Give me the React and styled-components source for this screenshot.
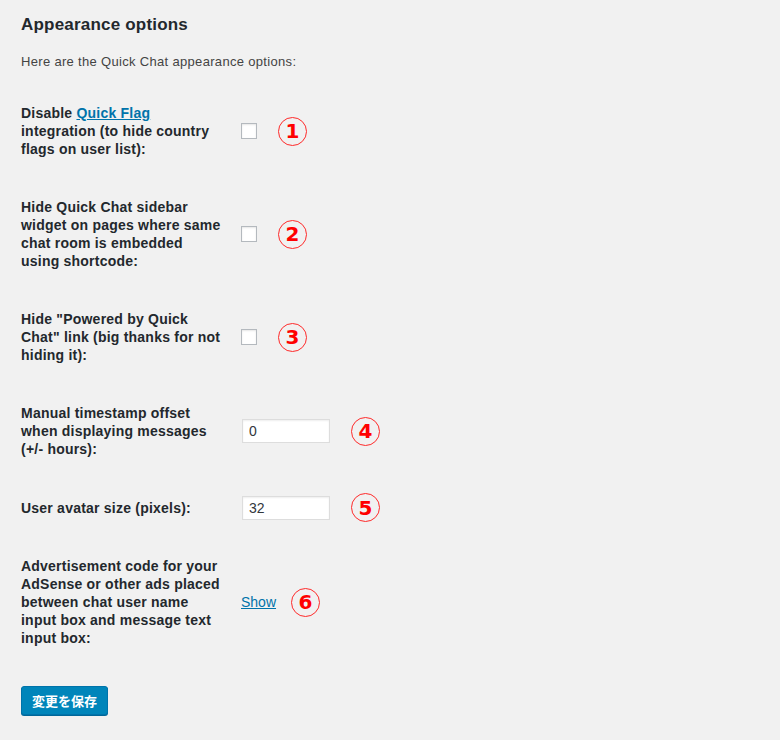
import React from 'react';
import styled, { createGlobalStyle } from 'styled-components';

const GlobalStyle = createGlobalStyle`
  html, body {
    margin: 0;
    padding: 0;
    background: #f1f1f1;
  }
  body {
    font-family: "Liberation Sans", Arial, sans-serif;
    color: #23282d;
  }
`;

const Wrap = styled.div`
  width: 780px;
  min-height: 740px;
  padding: 13px 21px 0;
  box-sizing: border-box;
  background: #f1f1f1;
`;

const Heading = styled.h2`
  margin: 0;
  font-size: 17px;
  line-height: 23px;
  font-weight: 700;
  letter-spacing: 0.2px;
  color: #23282d;
`;

const Intro = styled.p`
  margin: 16px 0 13px;
  font-size: 13px;
  line-height: 19px;
  letter-spacing: 0.32px;
  color: #444;
`;

const FormTable = styled.table`
  border-collapse: collapse;
  border-spacing: 0;
`;

const Label = styled.th`
  width: 200px;
  padding: 20px 10px 20px 0;
  text-align: left;
  vertical-align: middle;
  font-size: 14px;
  line-height: 18px;
  font-weight: 700;
  letter-spacing: 0.22px;
  color: #23282d;
`;

const Field = styled.td`
  padding: 15px 10px;
  vertical-align: middle;
`;

const FieldInner = styled.div`
  display: flex;
  align-items: center;
  gap: ${(p) => p.$gap || 21}px;
`;

const Check = styled.span`
  display: block;
  width: 14px;
  height: 14px;
  border: 1px solid #b4b9be;
  background: #fff;
  box-shadow: inset 0 1px 2px rgba(0, 0, 0, 0.1);
`;

const TextInput = styled.input`
  width: 88px;
  height: 24px;
  box-sizing: border-box;
  margin: 0 0 0 1px;
  padding: 3px 6px;
  border: 1px solid #ddd;
  background: #fff;
  box-shadow: inset 0 1px 2px rgba(0, 0, 0, 0.07);
  font-family: "Liberation Sans", Arial, sans-serif;
  font-size: 14px;
  color: #32373c;
  outline: none;
`;

const Link = styled.a`
  color: #0073aa;
  text-decoration: underline;
  font-weight: ${(p) => (p.$bold ? 700 : 400)};
  font-size: 14px;
`;

const Marker = styled.span`
  display: flex;
  align-items: center;
  justify-content: center;
  width: 29px;
  height: 29px;
  box-sizing: border-box;
  border: 1px solid #ff2a2a;
  border-radius: 50%;
  color: #ff0000;
  font-family: "DejaVu Sans", "Liberation Sans", sans-serif;
  font-weight: 700;
  font-size: 20px;
  line-height: 1;
`;

const SaveButton = styled.button`
  margin-top: 19px;
  height: 29px;
  padding: 0 10px;
  border: 1px solid #0073aa;
  border-radius: 3px;
  background: #0085ba;
  box-shadow: 0 1px 0 #006799;
  color: #fff;
  font-family: "Noto Sans CJK JP", "Liberation Sans", sans-serif;
  font-size: 13px;
  font-weight: 700;
  cursor: pointer;
`;

const rows = [
  {
    label: (
      <>
        Disable <Link $bold href="#">Quick Flag</Link> integration (to hide country flags on user list):
      </>
    ),
    control: <Check />,
    n: 1,
  },
  {
    label: 'Hide Quick Chat sidebar widget on pages where same chat room is embedded using shortcode:',
    control: <Check />,
    n: 2,
  },
  {
    label: 'Hide "Powered by Quick Chat" link (big thanks for not hiding it):',
    control: <Check />,
    n: 3,
  },
  {
    label: 'Manual timestamp offset when displaying messages (+/- hours):',
    control: <TextInput defaultValue="0" />,
    n: 4,
  },
  {
    label: 'User avatar size (pixels):',
    control: <TextInput defaultValue="32" />,
    n: 5,
  },
  {
    label: 'Advertisement code for your AdSense or other ads placed between chat user name input box and message text input box:',
    control: <Link href="#">Show</Link>,
    n: 6,
    gap: 15,
  },
];

const App = () => {
  return (
    <Wrap>
      <GlobalStyle />
      <Heading>Appearance options</Heading>
      <Intro>Here are the Quick Chat appearance options:</Intro>
      <FormTable>
        <tbody>
          {rows.map((r) => (
            <tr key={r.n}>
              <Label>{r.label}</Label>
              <Field>
                <FieldInner $gap={r.gap}>
                  {r.control}
                  <Marker>{r.n}</Marker>
                </FieldInner>
              </Field>
            </tr>
          ))}
        </tbody>
      </FormTable>
      <SaveButton>変更を保存</SaveButton>
    </Wrap>
  );
};

export default App;
